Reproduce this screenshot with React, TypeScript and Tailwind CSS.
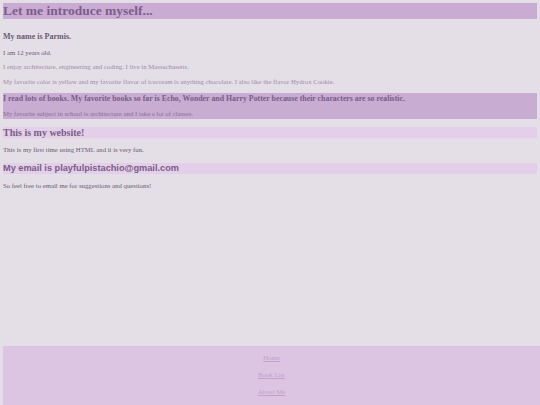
import React from "react";

export default function App() {
  const serif = { fontFamily: '"Liberation Serif", "Times New Roman", serif' };
  return (
    <div
      className="w-[540px] h-[405px] overflow-hidden bg-[#e4dfe6] pt-[3px] pl-[3px] pr-[3px] flex flex-col"
      style={serif}
    >
      <h1 className="h-[16px] leading-[16px] text-[13.5px] font-bold bg-[#c8acd2] text-[#7d5d8c]">
        Let me introduce myself...
      </h1>
      <h3 className="mt-[13px] leading-[10px] text-[8px] font-bold text-[#6b5876]">
        My name is Parmis.
      </h3>
      <p className="mt-[7px] leading-[8px] text-[6.75px] text-[#6b5876]">I am 12 years old.</p>
      <p className="mt-[6px] leading-[8px] text-[6.75px] text-[#a08aa8]">
        I enjoy architecture, engineering and coding. I live in Massachusetts.
      </p>
      <p className="mt-[7px] leading-[8px] text-[6.75px] text-[#a08aa8]">
        My favorite color is yellow and my favorite flavor of icecream is anything chocolate. I also like the flavor Hydrox Cookie.
      </p>
      <div className="mt-[7px] bg-[#c8acd2] pt-[1px] pb-[1px]">
        <h3 className="leading-[10px] text-[7.85px] font-bold text-[#7a5c88]">
          I read lots of books. My favorite books so far is Echo, Wonder and Harry Potter because their characters are so realistic.
        </h3>
        <p className="mt-[6px] leading-[8px] text-[6.75px] text-[#8a6e96]">
          My favorite subject in school is architecture and I take a lot of classes.
        </p>
      </div>
      <h2 className="mt-[8px] h-[11px] leading-[11px] text-[10px] font-bold bg-[#e3cfe9] text-[#7a5c88]">
        This is my website!
      </h2>
      <p className="mt-[8px] leading-[8px] text-[6.75px] text-[#6b5a74]">
        This is my first time using HTML and it is very fun.
      </p>
      <h2
        className="mt-[9px] h-[11px] leading-[11px] text-[9.2px] font-bold bg-[#e3cfe9] text-[#7a5c88]"
        style={{ fontFamily: '"Liberation Sans", Arial, sans-serif' }}
      >
        My email is playfulpistachio@gmail.com
      </h2>
      <p className="mt-[8px] leading-[8px] text-[6.75px] text-[#6b5a74]">
        So feel free to email me for suggestions and questions!
      </p>
      <footer className="mt-auto mr-[-3px] bg-[#dbc5e2] pt-[8px] pb-[9px] flex flex-col items-center gap-[9px]">
        <a className="leading-[8px] text-[6.75px] underline text-[#c0a2cc]">Home</a>
        <a className="leading-[8px] text-[6.75px] underline text-[#c0a2cc]">Book List</a>
        <a className="leading-[8px] text-[6.75px] underline text-[#c0a2cc]">About Me</a>
      </footer>
    </div>
  );
}
